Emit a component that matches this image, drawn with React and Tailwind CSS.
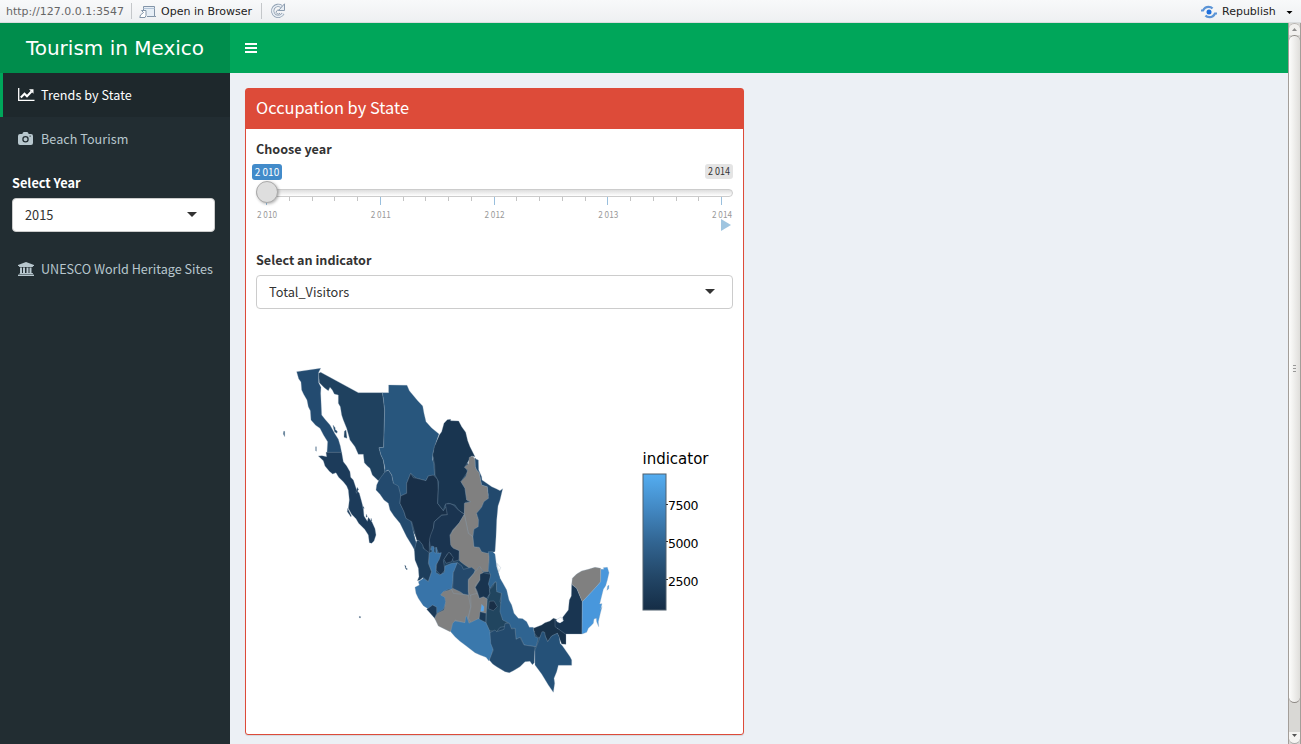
import React from "react";

const ui = "font-['Noto_Sans_CJK_SC','Noto_Sans',sans-serif]";

// Region outlines, grouped by the map tile in which their points are measured.
// The first tile is the land mass beneath the inner borders.
const tiles = [
  {
    x: 400, y: 540, base: true,
    regions: [
      ["#1f4260", "40,-25 -2,-130 -20,-190 10,-210 90,-200 112,-300 150,-330 190,-250 280,-110 280,0 275,45 295,100 318,170 335,225 350,245 400,280 400,300 350,370 325,388 270,355 165,265 112,245 65,180 70,130 62,20"],
      ["#1f4260", "-60,-150 -45,-215 -30,-190 10,-120 30,-60 46,0 36,-5 20,-30 -10,-80"],
      ["#1f4260", "385,275 405,275 430,265 465,255 475,290 480,310 440,350 405,330 390,350 380,330"],
      ["#808080", "150,150 230,90 250,98 240,160 260,175 255,235 200,252 150,262"],
      ["#808080", "155,-40 190,-100 215,-60 225,20 262,45 262,85 235,75 180,60 178,30 152,10"],
    ],
  },
  {
    x: 275, y: 360,
    regions: [
      ["#234b70", "65,35 137,25 131,37 131,68 138,82 137,100 140,165 150,178 165,195 180,222 190,238 196,258 200,278 156,278 158,245 146,226 135,205 122,196 108,180 106,152 100,140 96,120 86,103 80,90 78,66 71,56"],
      ["#1f415f", "137,37 250,98 322,98 325,115 329,150 326,262 312,263 318,285 325,300 330,335 322,350 310,362 292,345 285,325 277,318 268,308 265,283 250,283 240,260 225,240 215,205 205,180 200,165 196,140 190,130 190,105 178,102 172,90 165,82 160,92 148,83 133,68 131,40"],
      ["#28567d", "322,98 341,98 341,75 396,76 403,92 428,122 443,138 447,160 453,185 470,204 492,222 484,245 474,280 473,300 476,310 479,345 475,348 460,348 453,362 425,355 407,340 395,370 395,400 377,408 370,385 355,370 350,345 340,330 328,335 330,325 325,300 318,285 312,263 326,262 329,150 325,115"],
      ["#234a6c", "174,195 181,204 180,208 187,214 186,220 179,216 176,206"],
      ["#1f415f", "208,214 213,210 216,235 207,232"],
      ["#234a6c", "26,214 29,214 29,230 25,222"],
      ["#234a6c", "122,260 124,260 124,274 122,272"],
    ],
  },
  {
    x: 300, y: 440,
    regions: [
      ["#1c3b5a", "78,37 125,37 130,65 140,78 150,95 152,112 160,120 170,150 178,160 185,185 190,205 192,228 202,244 205,232 216,246 225,266 228,285 222,303 215,310 208,308 205,285 194,268 176,250 168,236 155,223 145,205 148,180 145,150 140,138 130,125 116,112 108,98 98,102 88,94 75,78 70,62 55,48 66,47 80,50"],
      ["#234a6e", "253,98 265,90 275,105 280,130 295,138 302,165 300,190 312,215 318,235 332,240 340,275 345,297 350,310 345,333 337,318 320,290 300,250 282,228 270,210 265,190 252,180 240,163 228,150 230,135 238,118"],
      ["#182f48", "332,100 340,113 350,115 378,122 385,108 400,105 413,118 415,150 413,190 430,212 442,195 442,225 425,225 403,245 398,280 388,310 388,340 376,332 370,322 362,308 350,300 342,270 335,245 318,235 312,215 300,190 302,168 320,160 320,130"],
      ["#1d3e5c", "350,302 357,301 368,315 370,325 388,338 385,370 395,395 385,425 370,412 360,420 352,422 357,410 355,385 345,360 343,330"],
      ["#1c3b5a", "172,142 175,148 170,160 168,155"],
      ["#1c3b5a", "188,197 193,205 188,205"],
      ["#1c3b5a", "199,222 202,230 198,232"],
      ["#1c3b5a", "213,234 216,243 213,242"],
      ["#1c3b5a", "143,205 154,227 153,231 142,215"],
      ["#1c3b5a", "314,376 318,378 318,384 322,386 321,390 317,386"],
      ["#1c3b5a", "178,529 182,530 181,534 178,533"],
    ],
  },
  {
    x: 400, y: 370,
    regions: [
      ["#193550", "142,149 152,148 152,152 176,153 185,170 197,187 203,212 210,230 225,260 215,258 195,290 203,305 183,335 195,355 200,390 212,395 196,397 193,433 175,420 165,405 145,400 135,405 130,422 113,400 116,335 105,315 104,285 98,255 103,230 118,195 125,185 132,160"],
      ["#1a3450", "136,402 150,401 160,405 175,420 193,433 178,458 158,480 150,495 155,530 178,542 177,570 160,575 152,550 142,552 130,572 135,600 122,615 108,600 112,570 120,558 114,545 108,532 92,540 88,510 92,495 100,475 103,455 125,436 142,434"],
      ["#808080", "208,262 217,258 225,266 226,290 230,300 238,308 245,345 262,350 266,385 252,395 245,412 230,430 236,450 235,470 222,478 219,500 205,490 193,433 193,400 212,395 200,390 195,355 183,335 198,318 203,300 193,292 205,282"],
      ["#808080", "193,433 205,490 218,500 222,530 238,532 245,545 268,550 265,605 250,605 238,590 225,612 212,597 190,582 178,572 178,542 160,535 152,525 150,495 178,458"],
      ["#22496d", "225,263 229,268 235,270 236,300 245,320 246,330 275,350 290,357 300,362 308,356 300,390 294,408 290,450 288,500 285,545 268,548 262,550 245,545 238,532 222,530 219,500 222,478 235,470 236,450 230,430 245,412 252,395 266,385 262,350 245,345 238,308 230,300 226,290"],
    ],
  },
  {
    x: 400, y: 540,
    regions: [
      ["#182f48", "147,36 160,52 155,65 138,70 132,58"],
      ["#3874a9", "88,40 97,34 93,28 95,18 102,20 102,35 108,40 107,25 110,22 112,40 124,38 118,58 108,75 108,98 120,105 133,97 135,78 155,70 172,68 168,90 160,95 158,125 155,148 145,148 130,155 123,165 135,172 137,190 130,208 110,220 108,200 98,197 85,207 70,197 55,175 48,160 45,142 58,135 55,125 70,115 85,125 95,95 86,70"],
      ["#1b3957", "80,208 98,195 110,202 110,220 104,235"],
      ["#808080", "155,148 160,160 205,165 212,200 205,230 200,250 165,240 160,270 150,275 115,258 104,235 112,220 132,210 137,185 135,172 122,165 130,155"],
      ["#24496c", "172,68 185,77 190,88 215,82 225,90 222,100 205,118 205,165 190,162 180,155 158,145 160,98"],
      ["#808080", "225,95 240,80 250,98 243,115 227,135 225,145 232,165 212,168 205,155 205,122"],
      ["#808080", "212,165 232,160 238,175 250,170 262,178 260,220 243,215 235,240 215,250 205,235 213,200"],
      ["#19344f", "240,103 250,98 272,103 275,130 268,145 270,160 260,175 250,170 238,175 232,155 226,142 240,120"],
      ["#21455f", "285,125 290,130 290,150 305,155 300,185 308,200 305,225 322,235 320,258 300,262 290,275 268,272 258,250 259,220 262,180 270,160 268,150 278,140"],
      ["#192f47", "268,184 282,183 292,200 280,212 265,206"],
      ["#52a5ee", "245,193 252,200 251,214 242,214"],
      ["#1b3955", "240,215 258,220 257,248 237,240"],
      ["#3a78ac", "158,250 165,243 195,248 197,230 200,228 207,250 235,236 258,248 270,275 273,300 280,325 273,350 267,363 258,352 240,345 225,338 195,315 180,304 165,290 152,275"],
    ],
  },
  {
    x: 480, y: 550,
    regions: [
      ["#2f6491", "25,5 38,5 45,12 50,50 60,85 68,98 80,120 87,150 95,165 102,190 115,205 128,206 140,215 148,232 160,232 165,260 175,265 168,290 132,285 122,262 108,268 105,235 92,235 88,220 68,210 60,185 65,130 50,125 49,96 45,95 30,115 25,102 32,75 25,60 28,25"],
      ["#234a6d", "30,248 45,240 50,245 72,238 75,220 88,220 95,237 105,235 108,268 120,262 132,285 165,290 163,338 157,344 150,334 135,335 120,350 100,362 88,368 75,365 50,350 38,342 28,330 40,300 32,280"],
      ["#183149", "160,235 185,225 195,218 210,213 220,205 230,208 235,215 232,235 250,243 258,250 258,283 245,282 232,250 215,258 203,275 190,245 180,262 173,262 165,252"],
      ["#193551", "275,103 290,115 307,155 306,252 256,252 235,237 225,230 225,208 240,218 250,213 248,202 265,180 268,150 274,138"],
      ["#808080", "277,85 290,72 305,63 325,58 345,52 362,55 362,95 345,115 307,155 290,115 275,103"],
      ["#4897dc", "363,58 372,58 370,53 382,52 387,68 382,90 377,107 370,118 362,150 359,162 366,161 362,178 366,170 361,190 355,215 356,230 350,215 349,205 342,207 340,220 333,227 325,235 320,247 306,252 307,155 345,115 362,95"],
      ["#4897dc", "383,108 387,106 386,116 381,121"],
      ["#255178", "186,245 194,247 196,260 203,275 215,258 232,250 238,262 240,280 247,287 270,320 275,330 275,346 235,346 230,365 222,385 224,400 220,427 205,405 185,372 165,345 165,300 175,275"],
      ["#ffffff", "228,210 243,201 250,212 240,219 232,216"],
      ["none", "51,40 62,53 56,66"],
    ],
  },
];

function StateMap() {
  return (
    <svg className="block w-full h-[405px]" viewBox="256 319 477 405">
      <defs>
        <linearGradient id="scale" x1="0" y1="0" x2="0" y2="1">
          <stop offset="0" stopColor="#54adf1" />
          <stop offset="0.25" stopColor="#4389c4" />
          <stop offset="0.5" stopColor="#326592" />
          <stop offset="0.75" stopColor="#234768" />
          <stop offset="1" stopColor="#152d46" />
        </linearGradient>
      </defs>
      {tiles.map((t, n) => (
        <g key={n} transform={`translate(${t.x} ${t.y}) scale(0.33333)`} stroke={t.base ? "none" : "#8ba3b8"} strokeWidth="0.9" strokeLinejoin="round">
          {t.regions.map(([fill, pts], i) => (
            <polygon key={i} points={pts} fill={fill} />
          ))}
        </g>
      ))}
      <g fontFamily="DejaVu Sans, sans-serif" fill="#000">
        <text x="642.5" y="464" fontSize="15" textLength="66">indicator</text>
        <rect x="643" y="474" width="23" height="136" fill="url(#scale)" stroke="#4f5f6c" strokeWidth="1" />
        <g fontSize="12.5">
          <text x="668" y="510" textLength="30.5">7500</text>
          <text x="668" y="548" textLength="30.5">5000</text>
          <text x="668" y="586" textLength="30.5">2500</text>
        </g>
        <path d="M666 504.5h2M666 541.5h2M666 579.5h2" stroke="#333" />
      </g>
    </svg>
  );
}

function Caret({ className }) {
  return (
    <svg className={className} width="10" height="5" viewBox="0 0 10 5">
      <path d="M0 0h10L5 5z" fill="#333" />
    </svg>
  );
}

function Select({ value, className }) {
  return (
    <div className={`flex h-[34px] items-center justify-between rounded-[4px] border border-[#ccc] bg-white pl-3 pr-[17px] text-[12.75px] text-[#333] ${className}`}>
      <span>{value}</span>
      <Caret className="-mt-0.5" />
    </div>
  );
}

function Bank() {
  return (
    <svg width="16" height="14" viewBox="0 0 16 14" fill="#b8c7ce">
      <path d="M8 0l8 3v1h-1v.5l-.5.5h-13L1 4.500V4H0V3zM2 5.500h2v5.500h1V5.500h2v5.500h1.500V5.500h2v5.500h1V5.500h2v5.500h1l.5.500v.5h-13.500v-.5L2 11zM.5 12.500h15l.5.5v1H0v-1z" />
    </svg>
  );
}

function Camera() {
  return (
    <svg className="-mt-0.5" width="15" height="13" viewBox="0 0 15 13">
      <path d="M2 2h2.300l.7-1.500Q5.300 0 6 0h3q.7 0 1 .5L10.700 2H13q2 0 2 2v7q0 2-2 2H2q-2 0-2-2V4q0-2 2-2z" fill="#b8c7ce" />
      <circle cx="7.500" cy="7.300" r="2.600" fill="none" stroke="#222d32" strokeWidth="1.300" />
      <rect x="11.500" y="3.500" width="1.300" height="1.300" fill="#4c5a60" />
    </svg>
  );
}

function Toolbar() {
  return (
    <div className="flex h-[23px] shrink-0 items-center border-b border-[#d9dcde] bg-gradient-to-b from-[#f8f9fa] to-[#eef0f2] pl-[6px] pr-2 font-['DejaVu_Sans',sans-serif] text-[11px] text-[#222]">
      <span className="w-[118px] pt-[2px] text-[#666]">http://127.0.0.1:3547</span>
      <span className="ml-[7px] h-4 w-px bg-[#c4c7ca]" />
      <svg className="ml-[7px] mt-0.5" width="18" height="14" viewBox="0 0 18 14" fill="none" stroke="#8294a8">
        <path d="M4.500 6V1.500h11v10H8" fill="#e6eef6" />
        <path d="M4.500 3.500h11" stroke="#b4c6d9" />
        <path d="M.8 12.500h5.200l1-2V5.500H2.500L4.500 7.500 1.500 10z" fill="#fff" strokeLinejoin="round" />
        <path d="M15.500 11.500H17" />
      </svg>
      <span className="ml-[4px] w-[92px] pt-[2px]">Open in Browser</span>
      <span className="ml-[8px] h-4 w-px bg-[#c4c7ca]" />
      <svg className="ml-2 -mt-px" width="16" height="16" viewBox="0 0 16 16" fill="none">
        <path d="M11.500 3.500A5.500 5.500 0 1 0 13 10.500" stroke="#8b9caf" strokeWidth="3.200" />
        <path d="M11.500 3.500A5.500 5.500 0 1 0 13 10.500" stroke="#e7edf3" strokeWidth="1.600" />
        <path d="M14.500 .8v6.700H8.500L10.800 5z" fill="#e7edf3" stroke="#8b9caf" />
        <path d="M9.500 7.500A2 2 0 1 0 10 10" stroke="#8b9caf" />
      </svg>
      <svg className="ml-auto mt-px" width="16" height="14" viewBox="0 0 16 14" fill="none">
        <path d="M0 5.500h2C3.300 2.800 5.300 1.800 7.500 1.800c2 0 3.300.8 4 1.700M16 8.500h-2C12.700 11.200 10.700 12.200 8.500 12.200c-2 0-3.300-.8-4-1.700" stroke="#5b94d6" strokeWidth="2.200" />
        <circle cx="8" cy="7" r="2.500" fill="#1d6fdc" />
      </svg>
      <span className="ml-[5px] w-[54px] pt-[2px]">Republish</span>
      <svg className="ml-[10px] mt-[3px]" width="7" height="3" viewBox="0 0 6 3"><path d="M0 0h6L3 3z" fill="#000" /></svg>
    </div>
  );
}

function Scrollbar() {
  return (
    <div className="flex w-[13px] shrink-0 flex-col border-x border-[#a39e99] bg-[#d9d8d5]">
      <div className="flex h-[12px] items-center justify-center rounded-t-full border-t border-[#b7b4b0] bg-[#f1f0ee]">
        <svg width="5" height="3" viewBox="0 0 5 3"><path d="M2.500 0L5 3H0z" fill="#8c8c8c" /></svg>
      </div>
      <div className="flex h-[668px] flex-col items-center justify-center gap-[2px] rounded-full border-y border-[#8d8985] bg-gradient-to-r from-[#fdfdfc] to-[#dfdedb] pb-0.5">
        <span className="h-px w-[3px] bg-[#999]" />
        <span className="h-px w-[3px] bg-[#999]" />
        <span className="h-px w-[3px] bg-[#999]" />
      </div>
      <div className="mt-auto flex h-[12px] items-center justify-center rounded-b-full border-b border-[#aaa] bg-[#f5f4f2] pb-1">
        <svg width="5" height="3" viewBox="0 0 5 3"><path d="M0 0h5L2.500 3z" fill="#555" /></svg>
      </div>
    </div>
  );
}

const ticks = Array.from({ length: 21 }, (_, i) => ({
  x: 10.500 + Math.round(i * 22.750 + 0.2),
  major: i % 5 === 0,
}));

function Slider() {
  return (
    <div className="relative h-[81px]">
      <span className="absolute -left-1 top-[3px] flex h-4 w-[30px] items-center justify-center rounded-[3px] bg-[#428bca] pb-px text-[10px] text-white">2 010</span>
      <span className="absolute right-0 top-[3px] flex h-[15px] w-7 items-center justify-center rounded-[3px] bg-[#e4e4e4] text-[9px] text-[#333]"><span className="scale-y-110">2 014</span></span>
      <div className="absolute left-0 right-0 top-[28px] h-2 rounded-full border border-[#ccc] bg-gradient-to-b from-[#dedede] to-white" />
      <svg className="absolute left-0 top-[36px]" width="477" height="9" viewBox="0 0 477 9">
        {ticks.map((t) => (
          <path key={t.x} d={t.major ? `M${t.x} 0v8` : `M${t.x} 0v4`} stroke={t.major ? "#99bfdd" : "#c4c4c4"} />
        ))}
      </svg>
      <span className="absolute left-0 top-[20px] h-[22px] w-[22px] rounded-full border border-[#aaa] bg-[#dedede] shadow-[1px_1px_3px_rgba(0,0,0,0.3)]" />
      <div className="absolute left-[-4px] top-[46px] flex w-[485px] justify-between text-[8.200px] leading-3 text-[#999]">
        {["2 010", "2 011", "2 012", "2 013", "2 014"].map((y) => (
          <span key={y} className="w-[30px] origin-center scale-y-120 text-center">{y}</span>
        ))}
      </div>
      <svg className="absolute right-[2px] top-[58px]" width="10" height="12" viewBox="0 0 10 12"><path d="M0 0l10 6L0 12z" fill="#9fc5e0" /></svg>
    </div>
  );
}

export default function App() {
  return (
    <div className={`flex h-[744px] w-[1301px] flex-col overflow-hidden ${ui}`}>
      <Toolbar />
      <div className="flex min-h-0 flex-1">
        <aside className="flex w-[230px] shrink-0 flex-col bg-[#222d32] text-[12.600px] text-[#b8c7ce]">
          <div className="flex h-[50px] items-center justify-center bg-[#008d4c] font-['DejaVu_Sans',sans-serif] text-[20px] text-white">Tourism in Mexico</div>
          <div className="flex h-[44px] items-center border-l-[3px] border-[#00a65a] bg-[#1e282c] pl-[15px] text-white">
            <svg width="17" height="14" viewBox="0 0 17 14" fill="none">
              <path d="M.7 0v12.300H16.500" stroke="#fff" strokeWidth="1.300" />
              <path d="M2.800 9.500l3.700-3.800 2.500 2.500 4.500-4.700" stroke="#fff" strokeWidth="2" />
              <path d="M11 1.200h4.500v4.500z" fill="#fff" />
            </svg>
            <span className="ml-[6px] tracking-[0.06px]">Trends by State</span>
          </div>
          <div className="flex h-[44px] items-center pl-[18px]">
            <Camera />
            <span className="ml-[8px] tracking-[0.04px]">Beach Tourism</span>
          </div>
          <div className="px-3 pt-3">
            <div className="h-[25px] text-[12.750px] font-bold leading-[20px] text-white">Select Year</div>
          </div>
          <Select value="2015" className="ml-3 w-[203px]" />
          <div className="mt-[15px] flex h-[44px] items-center pl-[18px]">
            <Bank />
            <span className="ml-[7px] whitespace-nowrap">UNESCO World Heritage Sites</span>
          </div>
        </aside>
        <div className="flex min-w-0 flex-1 flex-col bg-[#ecf0f5]">
          <header className="flex h-[50px] shrink-0 items-center bg-[#00a65a] pl-[15px]">
            <svg width="12" height="10" viewBox="0 0 12 10"><path d="M0 0h12v2H0zM0 4h12v2H0zM0 8h12v2H0z" fill="#fff" /></svg>
          </header>
          <main className="px-[15px] pt-[15px]">
            <section className="h-[647px] w-[499px] rounded-[3px] border border-[#dd4b39] bg-white shadow-[0_1px_1px_rgba(0,0,0,0.1)]">
              <h3 className="flex h-10 items-center bg-[#dd4b39] px-[10px] pb-[3px] text-[16.400px] text-white">Occupation by State</h3>
              <div className="px-[10px] pt-[10px] text-[12.600px] text-[#333]">
                <div className="h-[22px] font-bold leading-5">Choose year</div>
                <Slider />
                <div className="mt-2 h-[25px] font-bold leading-5">Select an indicator</div>
                <Select value="Total_Visitors" className="w-full" />
                <div className="pt-[10px]"><StateMap /></div>
              </div>
            </section>
          </main>
        </div>
        <Scrollbar />
      </div>
    </div>
  );
}
